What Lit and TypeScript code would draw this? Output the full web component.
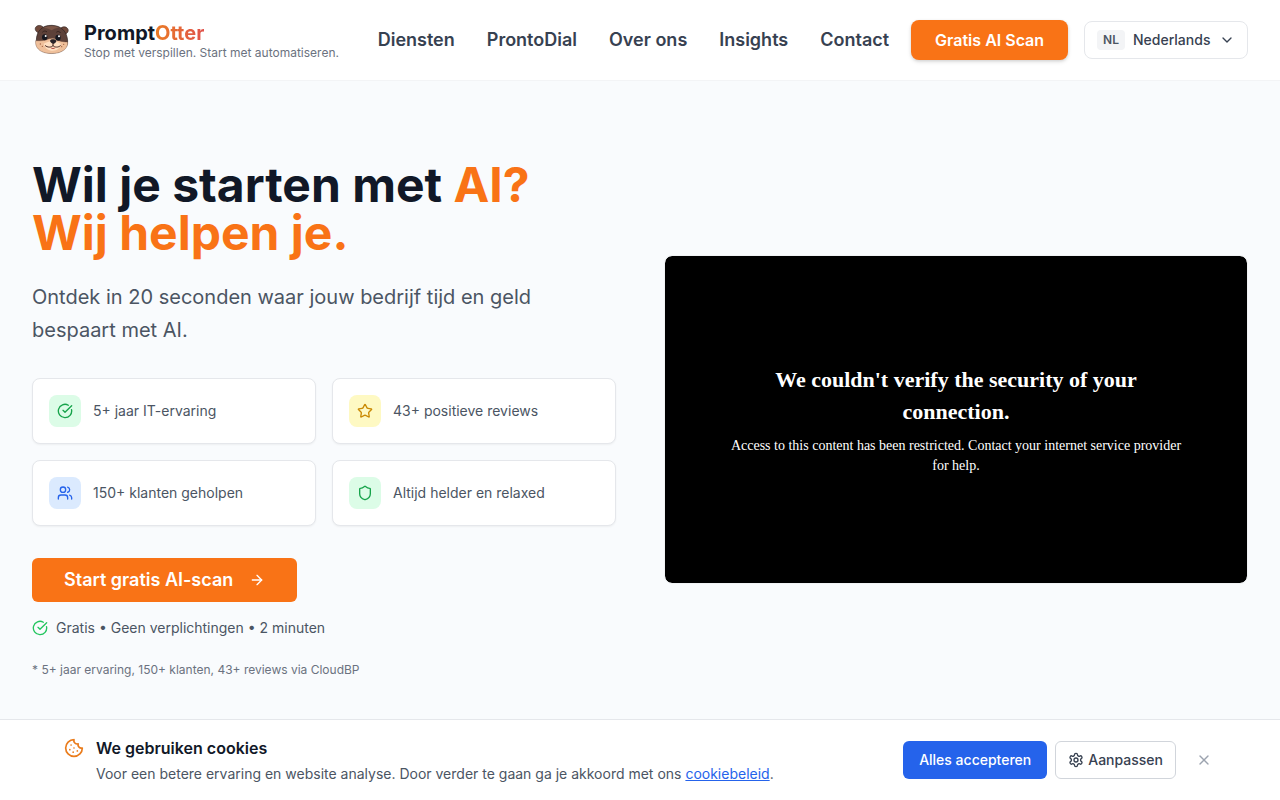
import { LitElement, html, css, svg } from "lit";
import { customElement, property } from "lit/decorators.js";

const icons: Record<string, unknown> = {
  check: svg`<path d="M21.801 10A10 10 0 1 1 17 3.335"/><path d="m9 11 3 3L22 4"/>`,
  star: svg`<path d="M11.525 2.295a.53.53 0 0 1 .95 0l2.31 4.679a2.123 2.123 0 0 0 1.595 1.16l5.166.756a.53.53 0 0 1 .294.904l-3.736 3.638a2.123 2.123 0 0 0-.611 1.878l.882 5.14a.53.53 0 0 1-.771.56l-4.618-2.428a2.122 2.122 0 0 0-1.973 0L6.396 21.01a.53.53 0 0 1-.77-.56l.881-5.139a2.122 2.122 0 0 0-.611-1.879L2.16 9.795a.53.53 0 0 1 .294-.906l5.165-.755a2.122 2.122 0 0 0 1.597-1.16z"/>`,
  users: svg`<path d="M16 21v-2a4 4 0 0 0-4-4H6a4 4 0 0 0-4 4v2"/><circle cx="9" cy="7" r="4"/><path d="M22 21v-2a4 4 0 0 0-3-3.87"/><path d="M16 3.13a4 4 0 0 1 0 7.75"/>`,
  shield: svg`<path d="M20 13c0 5-3.5 7.5-7.66 8.95a1 1 0 0 1-.67-.01C7.5 20.5 4 18 4 13V6a1 1 0 0 1 1-1c2 0 4.5-1.2 6.24-2.72a1.17 1.17 0 0 1 1.52 0C14.51 3.81 17 5 19 5a1 1 0 0 1 1 1z"/>`,
  arrow: svg`<path d="M5 12h14"/><path d="m12 5 7 7-7 7"/>`,
  chevron: svg`<path d="m6 9 6 6 6-6"/>`,
  close: svg`<path d="M18 6 6 18"/><path d="m6 6 12 12"/>`,
  cookie: svg`<path d="M12 2a10 10 0 1 0 10 10 4 4 0 0 1-5-5 4 4 0 0 1-5-5"/><path d="M8.5 8.5v.01"/><path d="M16 15.5v.01"/><path d="M12 12v.01"/><path d="M11 17v.01"/><path d="M7 14v.01"/>`,
  gear: svg`<path d="M12.22 2h-.44a2 2 0 0 0-2 2v.18a2 2 0 0 1-1 1.73l-.43.25a2 2 0 0 1-2 0l-.15-.08a2 2 0 0 0-2.73.73l-.22.38a2 2 0 0 0 .73 2.73l.15.1a2 2 0 0 1 1 1.72v.51a2 2 0 0 1-1 1.74l-.15.09a2 2 0 0 0-.73 2.73l.22.38a2 2 0 0 0 2.73.73l.15-.08a2 2 0 0 1 2 0l.43.25a2 2 0 0 1 1 1.73V20a2 2 0 0 0 2 2h.44a2 2 0 0 0 2-2v-.18a2 2 0 0 1 1-1.73l.43-.25a2 2 0 0 1 2 0l.15.08a2 2 0 0 0 2.73-.73l.22-.39a2 2 0 0 0-.73-2.73l-.15-.08a2 2 0 0 1-1-1.74v-.5a2 2 0 0 1 1-1.74l.15-.09a2 2 0 0 0 .73-2.73l-.22-.38a2 2 0 0 0-2.73-.73l-.15.08a2 2 0 0 1-2 0l-.43-.25a2 2 0 0 1-1-1.73V4a2 2 0 0 0-2-2z"/><circle cx="12" cy="12" r="3"/>`,
};

@customElement("line-icon")
class LineIcon extends LitElement {
  static styles = css`
    :host { display: inline-flex; flex: none; width: 16px; height: 16px; }
    svg { width: 100%; height: 100%; }
  `;
  @property() name = "";
  render() {
    return html`<svg viewBox="0 0 24 24" fill="none" stroke="currentColor" stroke-width="2"
      stroke-linecap="round" stroke-linejoin="round" aria-hidden="true">${icons[this.name]}</svg>`;
  }
}

@customElement("otter-logo")
class OtterLogo extends LitElement {
  static styles = css`
    :host { display: block; flex: none; width: 40px; height: 40px; }
    svg { display: block; width: 100%; height: 100%; }
  `;
  render() {
    return html`<svg viewBox="0 0 120 120" role="img" aria-label="PromptOtter">
      <g stroke="#2d211f" stroke-width="2" stroke-linejoin="round">
        <path fill="#70493b" d="M24 40C13 38 7 29 11 22c5-8 17-7 23 0z"/>
        <path fill="#70493b" d="M94 44c11-1 18-11 13-18-5-7-15-7-21-1z"/>
        <path fill="#5d4139" d="M13 62C13 33 31 15 60 16s45 19 47 47c0 23-20 35-46 36S13 88 13 62z"/>
      </g>
      <path fill="#7d5748" d="M34 24c15-9 38-8 50 1-12-3-18 3-25 6-8-3-14-8-25-7z"/>
      <path fill="#efc09b" stroke="#5a3a2e" stroke-width="1" d="M11 62c11 0 20 1 31-2 8-3 15-6 21-5s11 4 18 7c9 3 18 4 26 4 1 13-6 22-17 28-15 9-49 9-64-1C15 86 9 75 11 62z"/>
      <path fill="#ffe0c3" d="M35 71c9-3 16-8 27-8s19 5 25 9c-3 13-12 20-25 20s-23-7-27-21z"/>
      <path fill="none" stroke="#34231f" stroke-width="3" stroke-linecap="round" d="M32 36c4-4 8-4 12-1m30 1c4-3 8-2 11 2"/>
      <ellipse cx="38" cy="52" rx="8" ry="9" fill="#171820"/>
      <ellipse cx="78" cy="53" rx="8" ry="9" fill="#171820"/>
      <circle cx="41" cy="48" r="3" fill="#fff"/><circle cx="81" cy="49" r="3" fill="#fff"/>
      <path fill="#282329" d="M54 62c3-6 17-5 19 1 0 4-5 8-9 9-4-1-10-6-10-10z"/>
      <path fill="none" stroke="#4a2d27" stroke-width="3" stroke-linecap="round" d="M63 71v6m0 0c-5 6-17 6-23 0m23 0c5 6 17 6 22 0"/>
      <path fill="#b55448" d="M55 82c5 3 11 3 16 0-2 7-14 7-16 0z"/>
      <g fill="#a16042"><circle cx="25" cy="72" r="2"/><circle cx="31" cy="79" r="2"/><circle cx="95" cy="73" r="2"/><circle cx="89" cy="80" r="2"/></g>
    </svg>`;
  }
}

@customElement("app-root")
class AppRoot extends LitElement {
  static styles = css`
    :host {
      display: flex; flex-direction: column; min-height: 100vh;
      background: #f9fbfd; color: #4b5563;
      font: 14px/20px Inter, sans-serif;
    }
    * { box-sizing: border-box; }
    h1, h2, p, ul { margin: 0; padding: 0; }
    a { color: inherit; text-decoration: none; }
    button, select { font: inherit; cursor: pointer; }

    .header {
      display: flex; align-items: center; min-height: 81px; padding: 0 32px;
      border-bottom: 1px solid #f3f4f6; background: #fff;
    }
    .brand { display: flex; align-items: center; gap: 12px; margin-right: auto; }
    .words { padding-top: 2px; }
    .name { display: block; font-size: 20px; line-height: 24px; font-weight: 700; color: #111827; }
    .otter {
      background: linear-gradient(to right, #ea7b24, #e0524b);
      -webkit-background-clip: text; background-clip: text; color: transparent;
    }
    .tagline { display: block; font-size: 12px; line-height: 16px; color: #6b7280; }
    .nav { display: flex; gap: 32px; margin-right: 22px; font-size: 18px; line-height: 28px; font-weight: 600; color: #374151; }
    .actions { display: flex; align-items: center; gap: 16px; }
    .scan {
      padding: 8px 24px; border: 0; border-radius: 8px;
      background: #f97316; color: #fff; font-size: 16px; line-height: 24px; font-weight: 600;
      box-shadow: 0 1px 3px #0000001a, 0 2px 4px #0000001a;
    }
    .lang {
      display: flex; align-items: center; gap: 8px; padding: 8px 12px; height: 38px;
      border: 1px solid #e5e7eb; border-radius: 8px; background: #fff;
      color: #374151; font-weight: 500;
    }
    .code { padding: 2px 6px; border-radius: 4px; background: #f3f4f6; font-size: 12px; line-height: 16px; font-weight: 600; color: #4b5563; }
    .lang select { appearance: none; padding: 0; border: 0; background: none; color: inherit; }

    .hero {
      display: grid; grid-template-columns: 1fr 1fr; gap: 48px; align-items: center;
      padding: 80px 32px;
    }
    h1 { font-size: 48px; line-height: 48px; font-weight: 700; color: #111827; }
    .accent { color: #f97316; }
    .lead { margin-top: 24px; font-size: 20px; line-height: 33px; }
    .facts { display: grid; grid-template-columns: 1fr 1fr; gap: 16px; margin-top: 31px; list-style: none; }
    .fact {
      display: flex; align-items: center; gap: 12px; padding: 16px;
      border: 1px solid #e5e7eb; border-radius: 8px; background: #fff;
      box-shadow: 0 1px 2px #0000000d;
    }
    .tile { display: flex; padding: 8px; border-radius: 8px; }
    .green { background: #dcfce7; color: #16a34a; }
    .yellow { background: #fef9c3; color: #ca8a04; }
    .blue { background: #dbeafe; color: #2563eb; }
    .start {
      display: flex; align-items: center; gap: 16px; margin-top: 32px; padding: 8px 32px;
      border: 0; border-radius: 6px; background: #f97316; color: #fff;
      font-size: 18px; line-height: 28px; font-weight: 600;
    }
    .terms { display: flex; align-items: center; gap: 8px; margin-top: 16px; }
    .terms line-icon { color: #22c55e; }
    .note { margin-top: 24px; font-size: 12px; line-height: 16px; color: #6b7280; }

    .video {
      display: flex; flex-direction: column; justify-content: center; gap: 8px;
      aspect-ratio: 16 / 9; padding: 0 64px; border: 1px solid #f0f2f4; border-radius: 8px;
      background: #000; background-clip: padding-box; color: #fff; text-align: center;
      font-family: "Liberation Serif", serif;
    }
    .video h2 { font-size: 22px; line-height: 32px; font-weight: 700; }

    .cookies {
      position: fixed; left: 0; right: 0; bottom: 0;
      display: flex; align-items: center; justify-content: space-between; gap: 16px;
      padding: 16px 56px 16px 64px; border-top: 1px solid #e5e7eb; background: #fff;
    }
    .message { display: flex; align-items: flex-start; gap: 12px; }
    .message line-icon { width: 20px; height: 20px; margin-top: 2px; color: #ea7c1c; }
    .message h2 { font-size: 16px; line-height: 24px; font-weight: 600; color: #111827; }
    .message p { margin-top: 4px; }
    .message a { color: #2563eb; text-decoration: underline; }
    .choices { display: flex; align-items: center; gap: 8px; font-weight: 500; }
    .accept { padding: 9px 16px; border: 0; border-radius: 6px; background: #2563eb; color: #fff; }
    .adjust {
      display: flex; align-items: center; gap: 4px; padding: 8px 12px;
      border: 1px solid #d1d5db; border-radius: 6px; background: #fff; color: #374151;
    }
    .close { display: flex; padding: 12px; border: 0; background: none; color: #9ca3af; }
  `;

  private nav = ["Diensten", "ProntoDial", "Over ons", "Insights", "Contact"];
  private facts = [
    { icon: "check", tone: "green", text: "5+ jaar IT-ervaring" },
    { icon: "star", tone: "yellow", text: "43+ positieve reviews" },
    { icon: "users", tone: "blue", text: "150+ klanten geholpen" },
    { icon: "shield", tone: "green", text: "Altijd helder en relaxed" },
  ];

  render() {
    return html`
      <header class="header">
        <a class="brand" href="#">
          <otter-logo></otter-logo>
          <span class="words">
            <span class="name">Prompt<span class="otter">Otter</span></span>
            <span class="tagline">Stop met verspillen. Start met automatiseren.</span>
          </span>
        </a>
        <nav class="nav">${this.nav.map((n) => html`<a href="#">${n}</a>`)}</nav>
        <div class="actions">
          <button class="scan">Gratis AI Scan</button>
          <label class="lang">
            <span class="code">NL</span>
            <select aria-label="Taal"><option>Nederlands</option></select>
            <line-icon name="chevron"></line-icon>
          </label>
        </div>
      </header>
      <main class="hero">
        <section>
          <h1>Wil je starten met <span class="accent">AI?<br />Wij helpen je.</span></h1>
          <p class="lead">Ontdek in 20 seconden waar jouw bedrijf tijd en geld bespaart met AI.</p>
          <ul class="facts">
            ${this.facts.map((f) => html`<li class="fact">
              <span class="tile ${f.tone}"><line-icon name=${f.icon}></line-icon></span>${f.text}
            </li>`)}
          </ul>
          <button class="start">Start gratis AI-scan <line-icon name="arrow"></line-icon></button>
          <p class="terms"><line-icon name="check"></line-icon>Gratis • Geen verplichtingen • 2 minuten</p>
          <p class="note">* 5+ jaar ervaring, 150+ klanten, 43+ reviews via CloudBP</p>
        </section>
        <section class="video">
          <h2>We couldn't verify the security of your connection.</h2>
          <p>Access to this content has been restricted. Contact your internet service provider for help.</p>
        </section>
      </main>
      <aside class="cookies" aria-label="Cookies">
        <div class="message">
          <line-icon name="cookie"></line-icon>
          <div>
            <h2>We gebruiken cookies</h2>
            <p>Voor een betere ervaring en website analyse. Door verder te gaan ga je akkoord met ons <a href="#">cookiebeleid</a>.</p>
          </div>
        </div>
        <div class="choices">
          <button class="accept">Alles accepteren</button>
          <button class="adjust"><line-icon name="gear"></line-icon>Aanpassen</button>
          <button class="close" aria-label="Sluiten"><line-icon name="close"></line-icon></button>
        </div>
      </aside>
    `;
  }
}
